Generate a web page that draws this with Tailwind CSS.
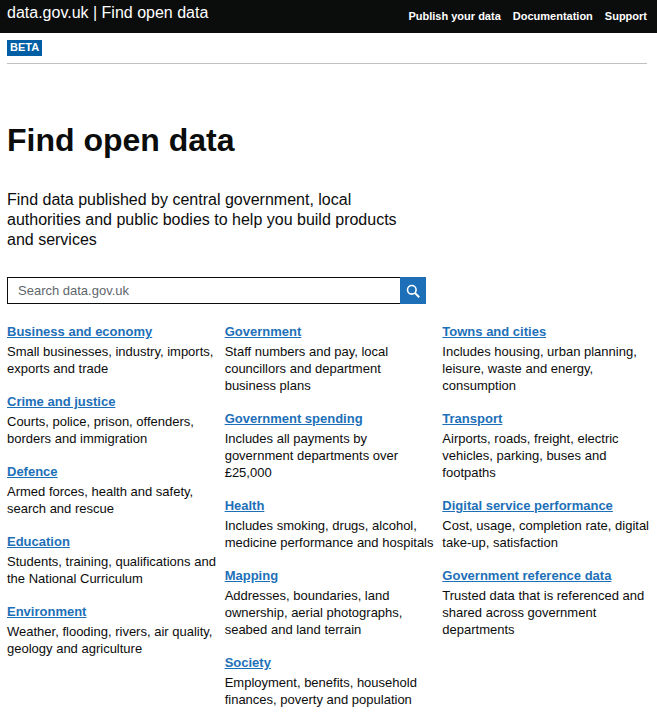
<!DOCTYPE html>
<html lang="en">
<head>
<meta charset="utf-8">
<meta name="viewport" content="width=device-width, initial-scale=1">
<title>Find open data - data.gov.uk</title>
<script src="https://cdn.jsdelivr.net/npm/@tailwindcss/browser@4"></script>
</head>
<body class="bg-white font-['Liberation_Sans',Arial,sans-serif] text-[#0b0c0c]">
<header class="flex h-[33px] justify-between bg-[#0b0c0c] pl-[7px] pr-[10px] text-white">
  <a href="#" class="pt-[3px] text-[16px] leading-[20px]">data.gov.uk | Find open data</a>
  <nav aria-label="Main" class="flex gap-[12px] pt-[8px] text-[11px] leading-[16px] font-bold">
    <a href="#">Publish your data</a>
    <a href="#">Documentation</a>
    <a href="#">Support</a>
  </nav>
</header>
<div class="ml-[7px] mr-[10px]">
  <div class="flex border-b border-[#bfc1c3] pt-[7px] pb-[7px]">
    <strong class="bg-[#005ea5] px-[3px] pb-[2px] text-[11px] leading-[14px] text-white">BETA</strong>
  </div>
  <main>
    <h1 class="mt-[56px] text-[32px] leading-[40px] font-bold">Find open data</h1>
    <p class="mt-[30px] w-[63%] text-[16px] leading-[20px]">Find data published by central government, local authorities and public bodies to help you build products and services</p>
    <form role="search" class="mt-[27px] flex w-[calc((200%-23px)/3)]">
      <label for="q" class="sr-only">Search data.gov.uk</label>
      <input id="q" type="search" placeholder="Search data.gov.uk" class="h-[27px] min-w-0 flex-1 border border-r-0 border-[#0b0c0c] px-[10px] text-[13px] text-[#0b0c0c] placeholder:text-[#5f666b]">
      <button type="button" aria-label="Search" class="flex h-[27px] w-[26px] items-center justify-center bg-[#1d70b8]">
        <svg class="h-[14px] w-[14px]" viewBox="0 0 14 14" fill="none" stroke="#fff" aria-hidden="true"><circle cx="5.8" cy="5.8" r="4.3" stroke-width="1.6"/><path d="M8.9 8.9L13.2 13.2" stroke-width="2"/></svg>
      </button>
    </form>
    <div class="mt-[19px] -mr-[6px] grid grid-cols-3 gap-x-[7px] text-[13px] leading-[17px]">
      <ul class="space-y-[16px]">
        <li><h2 class="h-[20px] font-bold"><a href="#" class="text-[#1d70b8] underline">Business and economy</a></h2><p>Small businesses, industry, imports, exports and trade</p></li>
        <li><h2 class="h-[20px] font-bold"><a href="#" class="text-[#1d70b8] underline">Crime and justice</a></h2><p>Courts, police, prison, offenders, borders and immigration</p></li>
        <li><h2 class="h-[20px] font-bold"><a href="#" class="text-[#1d70b8] underline">Defence</a></h2><p>Armed forces, health and safety, search and rescue</p></li>
        <li><h2 class="h-[20px] font-bold"><a href="#" class="text-[#1d70b8] underline">Education</a></h2><p>Students, training, qualifications and the National Curriculum</p></li>
        <li><h2 class="h-[20px] font-bold"><a href="#" class="text-[#1d70b8] underline">Environment</a></h2><p>Weather, flooding, rivers, air quality, geology and agriculture</p></li>
      </ul>
      <ul class="space-y-[16px]">
        <li><h2 class="h-[20px] font-bold"><a href="#" class="text-[#1d70b8] underline">Government</a></h2><p>Staff numbers and pay, local councillors and department business plans</p></li>
        <li><h2 class="h-[20px] font-bold"><a href="#" class="text-[#1d70b8] underline">Government spending</a></h2><p>Includes all payments by government departments over £25,000</p></li>
        <li><h2 class="h-[20px] font-bold"><a href="#" class="text-[#1d70b8] underline">Health</a></h2><p>Includes smoking, drugs, alcohol, medicine performance and hospitals</p></li>
        <li><h2 class="h-[20px] font-bold"><a href="#" class="text-[#1d70b8] underline">Mapping</a></h2><p>Addresses, boundaries, land ownership, aerial photographs, seabed and land terrain</p></li>
        <li><h2 class="h-[20px] font-bold"><a href="#" class="text-[#1d70b8] underline">Society</a></h2><p>Employment, benefits, household finances, poverty and population</p></li>
      </ul>
      <ul class="space-y-[16px]">
        <li><h2 class="h-[20px] font-bold"><a href="#" class="text-[#1d70b8] underline">Towns and cities</a></h2><p>Includes housing, urban planning, leisure, waste and energy, consumption</p></li>
        <li><h2 class="h-[20px] font-bold"><a href="#" class="text-[#1d70b8] underline">Transport</a></h2><p>Airports, roads, freight, electric vehicles, parking, buses and footpaths</p></li>
        <li><h2 class="h-[20px] font-bold"><a href="#" class="text-[#1d70b8] underline">Digital service performance</a></h2><p>Cost, usage, completion rate, digital take-up, satisfaction</p></li>
        <li><h2 class="h-[20px] font-bold"><a href="#" class="text-[#1d70b8] underline">Government reference data</a></h2><p>Trusted data that is referenced and shared across government departments</p></li>
      </ul>
    </div>
  </main>
</div>
</body>
</html>
